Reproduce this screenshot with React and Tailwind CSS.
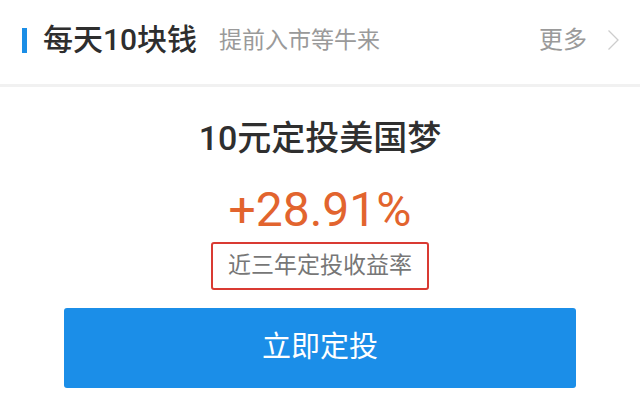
import React from 'react';

const font = { fontFamily: 'Roboto, "Noto Sans CJK SC", sans-serif' };

function Header() {
  return (
    <div className="flex h-[84px] items-center pb-[4px] pl-[22px] pr-[20px]">
      <div className="h-[25px] w-[5px] bg-[#1b8ee6]" />
      <div className="ml-[16px] text-[30px] font-medium leading-none text-[#2e2e2e]">每天10块钱</div>
      <div className="ml-[22px] text-[23px] leading-none text-[#9a9a9a]">提前入市等牛来</div>
      <div className="ml-auto flex items-center">
        <span className="text-[24px] leading-none text-[#9a9a9a]">更多</span>
        <svg className="ml-[20px]" width="13" height="22" viewBox="0 0 13 22" fill="none">
          <path d="M1.5 1.5 L11 11 L1.5 20.5" stroke="#cdcdcd" strokeWidth="1.3" />
        </svg>
      </div>
    </div>
  );
}

export default function App() {
  return (
    <div className="h-[413px] w-[640px] overflow-hidden bg-white" style={font}>
      <Header />
      <div className="h-[3px] bg-[#f1f1f1]" />
      <div className="flex flex-col items-center pt-[31px]">
        <div className="text-[34px] font-medium leading-[40px] text-[#2f2f2f]">10元定投美国梦</div>
        <div className="mt-[24px] text-[48px] leading-[56px] text-[#e2642e]">+28.91%</div>
        <div className="mt-[4px] flex h-[48px] w-[218px] items-center justify-center rounded-[3px] border-2 border-[#d93a32] text-[23px] text-[#777777]">
          近三年定投收益率
        </div>
        <button className="mt-[18px] flex h-[80px] w-[512px] items-center justify-center rounded-[3px] bg-[#1b8ee8] text-[29px] text-white">
          立即定投
        </button>
      </div>
    </div>
  );
}
